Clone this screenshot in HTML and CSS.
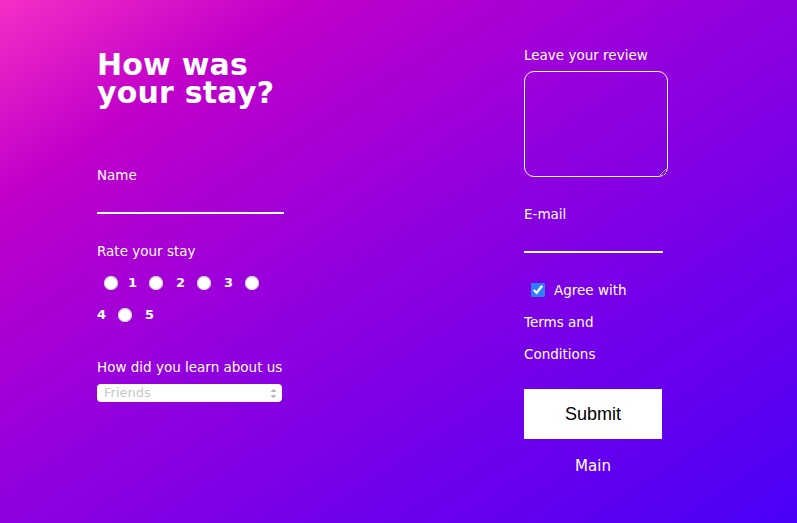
FILE: index.html
```html
<!DOCTYPE html>
<html lang="en">
<head>
<meta charset="utf-8">
<title>How was your stay?</title>
<link rel="stylesheet" href="styles.css">
</head>
<body>
<form class="page">
  <div class="col col-left">
    <h1 class="title"><span class="title-line">How was</span><span class="title-line">your stay?</span></h1>

    <label class="label label-name" for="name">Name</label>
    <input class="line-input" id="name" type="text">

    <div class="label label-rate">Rate your stay</div>
    <div class="rating">
      <input class="radio radio-first" type="radio" name="rate"><span class="digit">1</span>
      <input class="radio" type="radio" name="rate"><span class="digit">2</span>
      <input class="radio" type="radio" name="rate"><span class="digit">3</span>
      <input class="radio" type="radio" name="rate"><span class="digit">4</span>
      <input class="radio" type="radio" name="rate"><span class="digit">5</span>
    </div>

    <label class="label label-learn" for="learn">How did you learn about us</label>
    <div class="select-wrap">
      <select class="select" id="learn">
        <option>Friends</option>
      </select>
      <svg class="select-arrows" width="7" height="11" viewBox="0 0 7 11"><path d="M0.5 4 L3.5 0.8 L6.5 4 Z M0.5 7 L3.5 10.2 L6.5 7 Z" fill="#b8b8b8"/></svg>
    </div>
  </div>

  <div class="col col-right">
    <label class="label label-review" for="review">Leave your review</label>
    <textarea class="review" id="review"></textarea>

    <label class="label label-email" for="email">E-mail</label>
    <input class="line-input line-input-email" id="email" type="email">

    <div class="agree"><input class="check" type="checkbox" checked>Agree with Terms and Conditions</div>

    <button class="submit" type="button">Submit</button>
    <a class="main-link">Main</a>
  </div>
</form>
</body>
</html>
```

FILE: styles.css
```css
html, body {
  margin: 0;
  height: 100%;
}

body {
  background: linear-gradient(to bottom right, #f62fc5 0%, #c000ca 19%, #8e00e0 50%, #4a00f8 100%);
  font-family: "DejaVu Sans", Verdana, sans-serif;
  font-size: 13.5px;
  color: #ffffff;
  overflow: hidden;
}

.page {
  display: flex;
  padding: 47px 0 0 97px;
}

.col {
  display: flex;
  flex-direction: column;
  align-items: flex-start;
}

.col-left {
  width: 187px;
}

.col-right {
  margin-left: 240px;
  width: 143px;
}

.title {
  display: flex;
  flex-direction: column;
  margin: 4px 0 0;
  font-size: 30px;
  font-weight: bold;
  letter-spacing: 0.2px;
}

.title-line {
  display: block;
  height: 28px;
  line-height: 28px;
  white-space: nowrap;
}

.label {
  display: block;
  line-height: 16px;
  height: 16px;
  white-space: nowrap;
}

.label-name { margin-top: 60px; }
.label-rate { margin-top: 29px; }
.label-learn { margin-top: 28px; }
.label-email { margin-top: 29px; }

.line-input {
  display: block;
  box-sizing: border-box;
  width: 187px;
  height: 31px;
  margin: 0;
  padding: 0;
  border: 0;
  border-bottom: 2px solid #ffffff;
  background: transparent;
  color: #ffffff;
  font: inherit;
  outline: none;
}

.line-input-email {
  width: 139px;
}

.rating {
  display: flex;
  flex-wrap: wrap;
  align-items: center;
  width: 180px;
  margin-top: 8px;
}

.radio {
  appearance: none;
  -webkit-appearance: none;
  box-sizing: border-box;
  width: 14px;
  height: 14px;
  margin: 9px 13px 9px 11px;
  border-radius: 50%;
  background: #ffffff;
  box-shadow: inset 0 0 0 1px #c9c9c9, inset 0 1px 2px rgba(0, 0, 0, 0.15);
}

.radio-first {
  margin-left: 7px;
  margin-right: 10px;
}

.digit {
  display: inline-block;
  width: 10px;
  line-height: 32px;
  height: 32px;
  font-weight: bold;
  font-size: 13px;
}

.select-wrap {
  position: relative;
  margin-top: 9px;
  width: 185px;
  height: 18px;
}

.select {
  appearance: none;
  -webkit-appearance: none;
  box-sizing: border-box;
  width: 185px;
  height: 18px;
  margin: 0;
  padding: 0 0 0 7px;
  border: 0;
  border-radius: 4px;
  background: #ffffff;
  color: #c8c8c8;
  font-family: "DejaVu Sans", Verdana, sans-serif;
  font-size: 13px;
  line-height: 18px;
  outline: none;
}

.select-arrows {
  position: absolute;
  right: 5px;
  top: 4px;
}

.review {
  display: block;
  box-sizing: border-box;
  width: 144px;
  height: 106px;
  margin: 8px 0 0;
  padding: 4px;
  border: 1px solid #ffffff;
  border-radius: 10px;
  background: transparent;
  color: #ffffff;
  font: inherit;
  outline: none;
}

.agree {
  width: 139px;
  margin-top: 21px;
  line-height: 32px;
}

.check {
  width: 14px;
  height: 14px;
  margin: 0 9px 0 7px;
  vertical-align: -2px;
  accent-color: #2d7ff7;
}

.submit {
  display: block;
  width: 138px;
  height: 50px;
  margin-top: 19px;
  padding: 0;
  border: 0;
  background: #ffffff;
  color: #000000;
  font-family: "Liberation Sans", Arial, sans-serif;
  font-size: 18px;
}

.main-link {
  display: block;
  width: 138px;
  margin-top: 18px;
  text-align: center;
  font-size: 15px;
  line-height: 18px;
  color: #ffffff;
}
```
